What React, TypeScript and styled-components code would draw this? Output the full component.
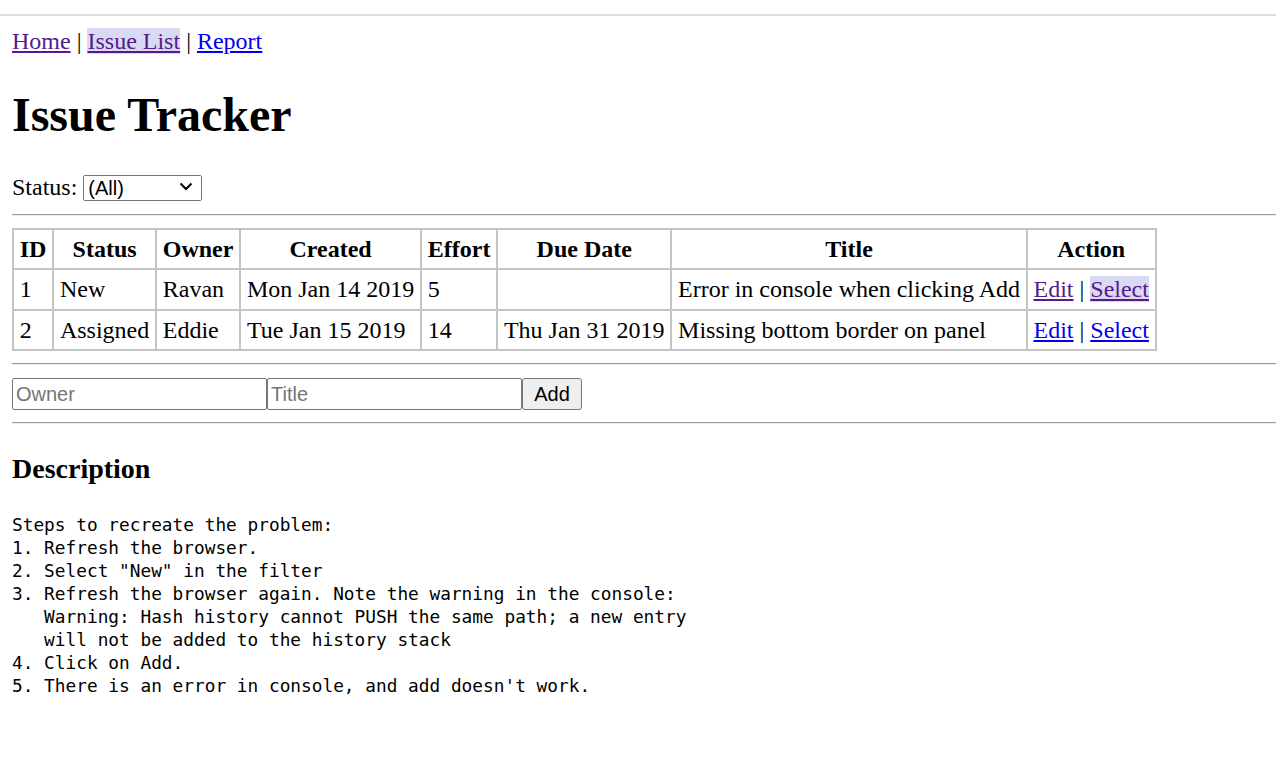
import React from "react";
import styled, { createGlobalStyle } from "styled-components";

const GlobalStyle = createGlobalStyle`
  html, body {
    margin: 0;
    padding: 0;
    background: #ffffff;
  }
  body {
    font-family: "Liberation Serif", "Times New Roman", serif;
    font-size: 24px;
    color: #000000;
  }
`;

type Issue = {
  id: number;
  status: string;
  owner: string;
  created: string;
  effort: string;
  due: string;
  title: string;
  visited: boolean;
};

const issues: Issue[] = [
  {
    id: 1,
    status: "New",
    owner: "Ravan",
    created: "Mon Jan 14 2019",
    effort: "5",
    due: "",
    title: "Error in console when clicking Add",
    visited: true,
  },
  {
    id: 2,
    status: "Assigned",
    owner: "Eddie",
    created: "Tue Jan 15 2019",
    effort: "14",
    due: "Thu Jan 31 2019",
    title: "Missing bottom border on panel",
    visited: false,
  },
];

const description = `Steps to recreate the problem:
1. Refresh the browser.
2. Select "New" in the filter
3. Refresh the browser again. Note the warning in the console:
   Warning: Hash history cannot PUSH the same path; a new entry
   will not be added to the history stack
4. Click on Add.
5. There is an error in console, and add doesn't work.`;

export default function App() {
  return (
    <>
      <GlobalStyle />
      <TopRule />
      <Page>
        <Nav>
          <Link href="#/" $visited>
            Home
          </Link>{" "}
          |{" "}
          <Link href="#/issues" $visited $current>
            Issue List
          </Link>{" "}
          |{" "}
          <Link href="#/report">Report</Link>
        </Nav>

        <Heading>Issue Tracker</Heading>

        <Filter>
          Status:{" "}
          <SelectWrap>
            <StatusSelect defaultValue="">
              <option value="">(All)</option>
              <option value="New">New</option>
              <option value="Assigned">Assigned</option>
              <option value="Fixed">Fixed</option>
              <option value="Closed">Closed</option>
            </StatusSelect>
            <Chevron width="14" height="9" viewBox="0 0 14 9">
              <polyline
                points="1.5,1.5 7,7 12.5,1.5"
                fill="none"
                stroke="#000"
                strokeWidth="2"
              />
            </Chevron>
          </SelectWrap>
        </Filter>
        <Rule />

        <IssueTable>
          <thead>
            <tr>
              <Th>ID</Th>
              <Th>Status</Th>
              <Th>Owner</Th>
              <Th>Created</Th>
              <Th>Effort</Th>
              <Th>Due Date</Th>
              <Th>Title</Th>
              <Th>Action</Th>
            </tr>
          </thead>
          <tbody>
            {issues.map((issue) => (
              <tr key={issue.id}>
                <Td>{issue.id}</Td>
                <Td>{issue.status}</Td>
                <Td>{issue.owner}</Td>
                <Td>{issue.created}</Td>
                <Td>{issue.effort}</Td>
                <Td>{issue.due}</Td>
                <Td>{issue.title}</Td>
                <Td>
                  <Link href={`#/edit/${issue.id}`} $visited={issue.visited}>
                    Edit
                  </Link>{" "}
                  |{" "}
                  <Link
                    href={`#/issues/${issue.id}`}
                    $visited={issue.visited}
                    $current={issue.visited}
                  >
                    Select
                  </Link>
                </Td>
              </tr>
            ))}
          </tbody>
        </IssueTable>
        <Rule />

        <AddForm name="issueAdd">
          <TextInput type="text" name="owner" placeholder="Owner" />
          <TextInput type="text" name="title" placeholder="Title" />
          <AddButton type="button">Add</AddButton>
        </AddForm>
        <Rule />

        <SubHeading>Description</SubHeading>
        <Pre>{description}</Pre>
      </Page>
    </>
  );
}

const TopRule = styled.div`
  margin-top: 14px;
  height: 2px;
  background-color: #dadce0;
`;

const Page = styled.div`
  padding: 11px 0 0 12px;
`;

const Nav = styled.nav`
  line-height: 28px;
`;

const Link = styled.a<{ $visited?: boolean; $current?: boolean }>`
  color: ${(p) => (p.$visited ? "#551a8b" : "#0000ee")};
  background-color: ${(p) => (p.$current ? "#d9d9f3" : "transparent")};
  text-decoration: underline;
  text-underline-offset: 2px;
`;

const Heading = styled.h1`
  font-size: 48px;
  font-weight: 700;
  margin: 32px 0 31px;
  line-height: 55px;
`;

const Filter = styled.div`
  line-height: 29px;
`;

const SelectWrap = styled.span`
  position: relative;
  display: inline-block;
`;

const StatusSelect = styled.select`
  box-sizing: border-box;
  width: 119px;
  height: 26px;
  font-family: "Liberation Sans", Arial, sans-serif;
  font-size: 20px;
  color: #000000;
  background-color: #ffffff;
  border: 1px solid #767676;
  border-radius: 2px;
  padding: 0 4px;
  appearance: none;
  -webkit-appearance: none;
  vertical-align: baseline;
`;

const Chevron = styled.svg`
  position: absolute;
  right: 9px;
  top: 9px;
  pointer-events: none;
`;

const Rule = styled.hr`
  margin: 12px 0;
  border: none;
  border-top: 1px solid #9a9a9a;
  border-bottom: 1px solid #eeeeee;
  height: 0;
`;

const IssueTable = styled.table`
  border-collapse: collapse;
  margin-top: 12px;
`;

const Th = styled.th`
  border: 2px solid #c4c4c4;
  padding: 6px 5.75px;
  line-height: 26px;
  font-weight: 700;
  text-align: center;
  white-space: nowrap;
`;

const Td = styled.td`
  border: 2px solid #c4c4c4;
  padding: 6px 5.75px;
  line-height: 26.5px;
  text-align: left;
  white-space: nowrap;
`;

const AddForm = styled.form`
  display: flex;
  align-items: stretch;
  margin-top: 13px;
`;

const TextInput = styled.input`
  box-sizing: border-box;
  width: 255px;
  height: 32px;
  padding: 1px 3px;
  font-family: "Liberation Sans", Arial, sans-serif;
  font-size: 20px;
  color: #000000;
  border: 1px solid #767676;
  border-radius: 2px;
  margin: 0;

  &::placeholder {
    color: #757575;
  }
`;

const AddButton = styled.button`
  box-sizing: border-box;
  width: 60px;
  height: 32px;
  margin: 0;
  padding: 0 6px;
  font-family: "Liberation Sans", Arial, sans-serif;
  font-size: 20px;
  color: #000000;
  background-color: #efefef;
  border: 1px solid #767676;
  border-radius: 3px;
`;

const SubHeading = styled.h3`
  font-size: 28px;
  font-weight: 700;
  margin: 29px 0 28px;
  line-height: 32px;
`;

const Pre = styled.pre`
  font-family: "DejaVu Sans Mono", "Liberation Mono", monospace;
  font-size: 17.8px;
  line-height: 23px;
  margin: 0;
  white-space: pre;
`;
